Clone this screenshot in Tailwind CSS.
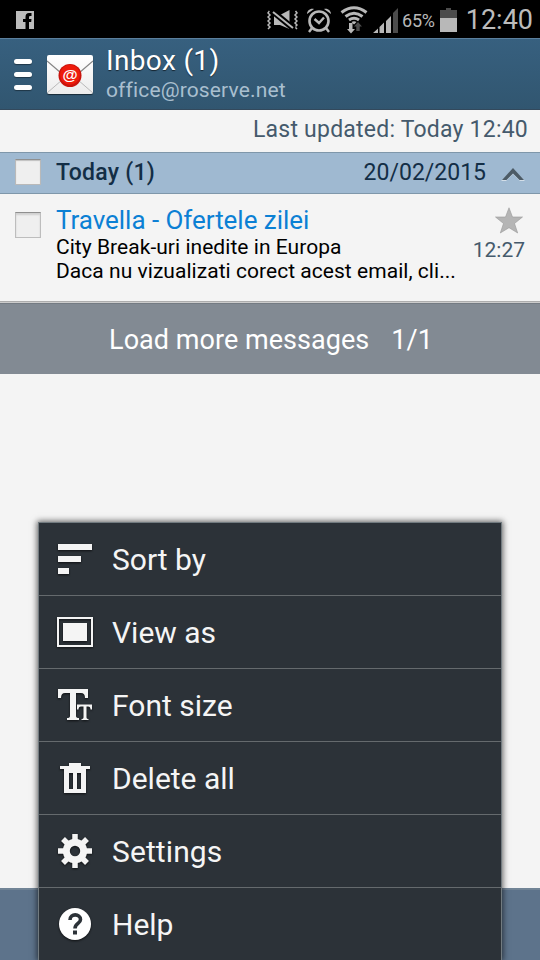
<!DOCTYPE html>
<html lang="en">
<head>
<meta charset="utf-8">
<title>Inbox</title>
<script src="https://cdn.jsdelivr.net/npm/@tailwindcss/browser@4"></script>
</head>
<body class="relative w-[540px] h-[960px] overflow-hidden bg-[#f4f4f4] font-[Roboto,'Noto_Sans',sans-serif] flex flex-col whitespace-nowrap">

<!-- Status bar -->
<div class="h-[38px] shrink-0 bg-black flex items-center pl-4 pr-[7px] pt-[2px] text-[#b8b8b8]">
  <svg class="w-[18px] h-[18px]" viewBox="0 0 18 18"><path fill="#bcbcbc" d="M0 0h18v18H0z"/><path d="M9.500 18v-7H7V8h2.500V6Q9.500 2 13 2h2.500v3H14q-1 0-1 1.200V8h2.500l-.3 3H13v7z"/></svg>
  <svg class="ml-[233px] w-[31px] h-[22px]" viewBox="0 0 31 22" fill="none" stroke="#b8b8b8"><path stroke-width="1.500" d="M2.500 2l-1.500 2 2 2-2 2 2 2-2 2 2 2-2 2 2 2-2 2M28.500 2l1.500 2-2 2 2 2-2 2 2 2-2 2 2 2-2 2 2 2"/><path stroke="none" fill="#b8b8b8" d="M7 6h6l9.500-5v19L13 16H7z"/><path stroke="#000" stroke-width="6" d="M4 1l23 19"/><path stroke-width="2" d="M6 3l20 16"/></svg>
  <svg class="ml-[8px] w-[26px] h-[26px]" viewBox="0 0 26 26" fill="none" stroke="#b8b8b8"><circle cx="13" cy="14" r="9.500" stroke-width="2.600"/><path stroke-width="2.400" d="M8.500 12l4.500 4 5-5.500M6 21l-3 4M20 21l3 4"/><path fill="#b8b8b8" stroke="none" d="M1 7c0-3 3-6 7-5zM25 7c0-3-3-6-7-5z"/></svg>
  <svg class="ml-[8px] w-[28px] h-[28px]" viewBox="0 0 28 28" fill="none" stroke="#b8b8b8" stroke-width="3"><path d="M1.500 6.500Q14-3 26.500 6.500M5.500 10.500q8.500-6.500 17 0M9 14q5-3.500 10 0"/><path fill="#b8b8b8" stroke="none" d="M11.500 16q2.500-1.500 5 0L14 18.500zM9 17h3.500v6H15l-4 4.500L7 23h2z"/><path fill="#4c4c4c" stroke="none" d="M18 16l4 4.500h-2.300V25h-3.400v-4.500H14z"/></svg>
  <svg class="ml-[5px] w-[26px] h-[25px]" viewBox="0 0 26 25"><path fill="#b8b8b8" d="M0 25l5-4.500V25zM6.500 19l4.500-4.500V25H6.500zM13 13l5-5v17h-5z"/><path fill="#4c4c4c" d="M20 5l5-5v25h-5z"/></svg>
  <span class="ml-[3px] w-[34px] text-[18px] leading-[38px] tracking-[-0.2px] pt-[2px]">65%</span>
  <svg class="ml-[4px] w-[17px] h-[25px]" viewBox="0 0 17 25"><path fill="#4c4c4c" d="M6 0h5v2h6v9H0V2h6z"/><path fill="#b8b8b8" d="M0 10h17v14H0z"/></svg>
  <span class="ml-auto text-[27px] leading-[38px] text-[#bcbcbc]">12:40</span>
</div>

<!-- Title bar -->
<header class="h-[72px] shrink-0 border-t border-[#5b7f9d] border-b border-b-[#33495c] bg-linear-to-b from-[#37607f] to-[#315670] flex pl-[14px]">
  <div class="mt-5 flex flex-col gap-2 w-[18px]">
    <i class="h-[5px] rounded-full bg-white shadow-[0_1px_1px_#0006]"></i>
    <i class="h-[5px] rounded-full bg-white shadow-[0_1px_1px_#0006]"></i>
    <i class="h-[5px] rounded-full bg-white shadow-[0_1px_1px_#0006]"></i>
  </div>
  <div class="relative ml-[15px] mt-[16px] w-[46px] h-[39px] rounded-[2px] bg-linear-to-b from-white to-[#ececec] shadow-[0_1px_1px_#0008]">
    <svg class="w-[46px] h-[39px]" viewBox="0 0 46 39" fill="none"><path stroke="#b9b9b9" d="M0 38l15-13M46 38L31 25"/><path stroke="#858585" stroke-width="1.200" d="M0 6l14 12M46 6L32 18"/><circle cx="23" cy="20.500" r="11.500" fill="#c9130c"/><circle cx="23" cy="19.800" r="10" fill="#ee1b0c"/><text x="23" y="24.500" text-anchor="middle" font-family="Liberation Sans" font-size="15.500" font-weight="700" fill="#fff">@</text></svg>
  </div>
  <div class="ml-[13px] pt-[6px]">
    <h1 class="text-[28px] leading-8 tracking-[0.35px] text-white [text-shadow:0_1px_1px_#0009]">Inbox (1)</h1>
    <p class="text-[21px] leading-6 mt-px tracking-[0.14px] text-[#a9bfcf]">office@roserve.net</p>
  </div>
</header>

<div class="h-[42px] shrink-0 pr-3 text-right text-[23px] leading-[39px] tracking-[0.22px] text-[#455a6c]">Last updated: Today 12:40</div>

<!-- Date group -->
<div class="h-[42px] shrink-0 flex items-center pl-[15px] pr-[15px] bg-[#9fb9d1] border-t border-b border-[#7f97aa] text-[#132e46] text-[23px]">
  <i class="mt-[-2px] w-[26px] h-[26px] border border-[#b9b9b9] border-t-[#8f8f8f] bg-[#efefef] shadow-[inset_0_1px_1px_#0003]"></i>
  <b class="ml-[15px] font-medium leading-[38px] tracking-[0.25px]">Today (1)</b>
  <span class="ml-auto leading-[38px]">20/02/2015</span>
  <svg class="ml-[15px] mt-[2px] w-[24px] h-[15px]" viewBox="0 0 24 15"><path fill="#d3dee8" d="M0 14L12 2l12 12h-5l-7-7-7 7z"/><path fill="#4c5b66" d="M1 13L12 1l11 12h-4.500L12 6.500 5.500 13z"/></svg>
</div>

<!-- Message -->
<div class="h-[107px] shrink-0 flex pl-[15px]">
  <i class="mt-[18px] w-[26px] h-[26px] border border-[#bdbdbd] border-t-[#8f8f8f] bg-[#efefef] shadow-[inset_0_2px_2px_#0002]"></i>
  <div class="ml-[15px] pt-[11px] w-[402px] text-black">
    <p class="text-[26px] leading-[30px] tracking-[-0.04px] text-[#0b80d4]">Travella - Ofertele zilei</p>
    <p class="text-[21px] leading-6 tracking-[0.04px]">City Break-uri inedite in Europa</p>
    <p class="text-[21px] leading-6 tracking-[0.04px]">Daca nu vizualizati corect acest email, cli...</p>
  </div>
  <div class="ml-auto mr-[15px] flex flex-col items-end">
    <svg class="mt-[13px] mr-[2px] w-[28px] h-[27px]" viewBox="0 0 28 27"><path fill="#b5b5b5" stroke="#999" stroke-width=".6" d="M14 .8l3.500 9.200h10l-8 6.500L22.700 26 14 20.700 5.300 26l3.200-9.500-8-6.500h10z"/></svg>
    <span class="text-[21px] leading-[30px] mt-[1px] text-[#455a6c]">12:27</span>
  </div>
</div>

<div class="h-[73px] shrink-0 border-t border-[#adadad] bg-[#828a93] shadow-[inset_0_1px_0_#ccc,inset_0_2px_0_#747b83] flex justify-center gap-[22px] pl-[2px] text-[27px] leading-[76px] tracking-[0.04px] text-white"><span>Load more messages</span><span>1/1</span></div>

<div class="mt-auto h-[72px] shrink-0 border-t-2 border-[#718496] bg-[#5d738b]"></div>

<!-- Options menu -->
<nav class="absolute left-[38px] top-[522px] w-[464px] h-[438px] border border-b-0 border-[#727b80] bg-[#2c3238] shadow-[0_0_6px_1px_#0009] text-[30px] leading-[72px] text-[#f5f5f5]">
  <div class="h-[73px] border-b border-[#656a6d] flex items-center pl-[18px] gap-[18px]">
    <svg class="w-[37px] h-[36px] drop-shadow-[0_1px_1px_#000a]" viewBox="0 0 37 36" fill="#f4f4f4"><path d="M1 3h34v6H1zM1 15h23v6H1zM1 27h11v6H1z"/></svg><span class="pt-[2px]">Sort by</span>
  </div>
  <div class="h-[73px] border-b border-[#656a6d] flex items-center pl-[18px] gap-[18px]">
    <svg class="w-[37px] h-[36px] drop-shadow-[0_1px_1px_#000a]" viewBox="0 0 37 36"><path fill="none" stroke="#f4f4f4" stroke-width="2" d="M1 4h34v28H1z"/><path fill="#f4f4f4" d="M6 9h24v18H6z"/></svg><span class="pt-[2px]">View as</span>
  </div>
  <div class="h-[73px] border-b border-[#656a6d] flex items-center pl-[18px] gap-[18px]">
    <svg class="w-[37px] h-[36px] drop-shadow-[0_1px_1px_#000a]" viewBox="0 0 37 36" fill="#f4f4f4"><path d="M1 2h30v9h-3Q28 6 24 6h-5v23q0 2 3 2v2H10v-2q3 0 3-2V6H8Q4 6 4 11H1z"/><path d="M20 17.500h15v5h-1.500q0-3-2.500-3h-1.500v11q0 1.500 2 1.500v1h-7v-1q2 0 2-1.500v-11H24q-2.500 0-2.500 3H20z"/></svg><span class="pt-[2px]">Font size</span>
  </div>
  <div class="h-[73px] border-b border-[#656a6d] flex items-center pl-[18px] gap-[18px]">
    <svg class="w-[37px] h-[36px] drop-shadow-[0_1px_1px_#000a]" viewBox="0 0 37 36" fill="#f4f4f4"><path fill-rule="evenodd" d="M12 3h12v3h9v3h-4v24H7V9H3V6h9zM12 13v16h4V13zM20 13v16h4V13z"/></svg><span class="pt-[2px]">Delete all</span>
  </div>
  <div class="h-[73px] border-b border-[#656a6d] flex items-center pl-[18px] gap-[18px]">
    <svg class="w-[37px] h-[36px] drop-shadow-[0_1px_1px_#000a]" viewBox="-18 -18 37 36"><circle r="8.700" fill="none" stroke="#f4f4f4" stroke-width="7"/><path stroke="#f4f4f4" stroke-width="5.500" d="M0-17v6M0 17v-6M-17 0h6M17 0h-6M-12-12l4 4M12 12l-4-4M-12 12l4-4M12-12l-4 4"/></svg><span class="pt-[2px] tracking-[0.1px]">Settings</span>
  </div>
  <div class="h-[73px] flex items-center pl-[18px] gap-[18px]">
    <svg class="w-[37px] h-[36px] drop-shadow-[0_1px_1px_#000a] -mt-px" viewBox="0 0 37 36"><circle cx="18" cy="18" r="16" fill="#fff"/><path fill="none" stroke="#2c3238" stroke-width="3.600" d="M13 14c0-7 10.500-6.500 10.500-.5 0 4-5.500 4-5.500 9"/><path fill="#2c3238" d="M16 24.500h4v4h-4z"/></svg><span>Help</span>
  </div>
</nav>
</body>
</html>
